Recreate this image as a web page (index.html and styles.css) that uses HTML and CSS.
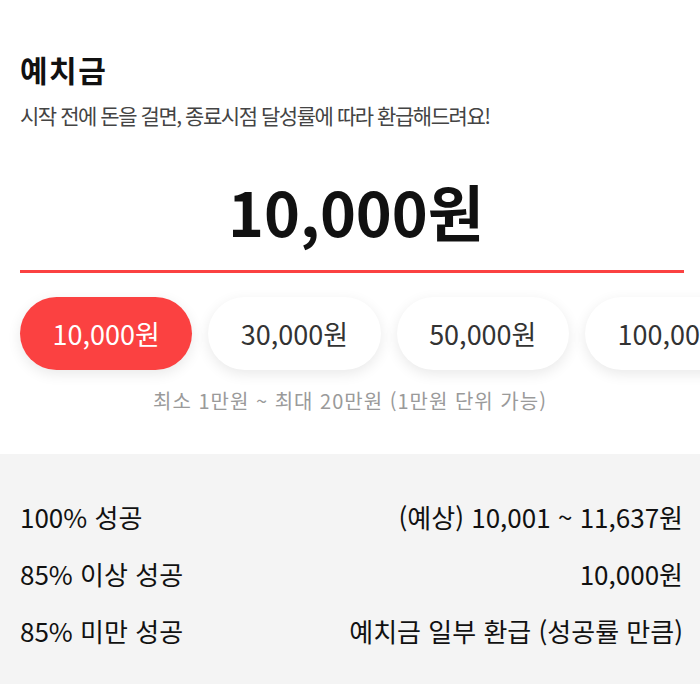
FILE: index.html
```html
<!DOCTYPE html>
<html lang="ko">
<head>
  <meta charset="UTF-8" />
  <meta name="viewport" content="width=device-width, initial-scale=1.0" />
  <title>예치금</title>
  <link rel="stylesheet" href="styles.css">
</head>
<body>
  <div class="deposit">
    <h1>예치금</h1>
    <p class="desc">시작 전에 돈을 걸면, 종료시점 달성률에 따라 환급해드려요!</p>

    <div class="amount">10,000원</div>

    <div class="chips">
      <button class="chip active">10,000원</button>
      <button class="chip">30,000원</button>
      <button class="chip">50,000원</button>
      <button class="chip">100,000원</button>
      <button class="chip">200,000원</button>
    </div>

    <p class="hint">최소 1만원 ~ 최대 20만원 (1만원 단위 가능)</p>
  </div>

  <div class="refund">
    <div class="refund-row">
      <span>100% 성공</span>
      <span>(예상) 10,001 ~ 11,637원</span>
    </div>
    <div class="refund-row">
      <span>85% 이상 성공</span>
      <span>10,000원</span>
    </div>
    <div class="refund-row">
      <span>85% 미만 성공</span>
      <span>예치금 일부 환급 (성공률 만큼)</span>
    </div>
  </div>
</body>
</html>
```

FILE: styles.css
```css
body {
  margin: 0;
  font-family: "Noto Sans CJK KR", "Noto Sans", sans-serif;
  background-color: #fff;
  color: #111;
}

.deposit {
  padding: 49px 0 0;
}

h1 {
  margin: 0 20px;
  font-size: 30px;
  font-weight: bold;
  line-height: 40px;
  letter-spacing: 1.5px;
}

.desc {
  margin: 11px 20px 0;
  font-size: 21px;
  line-height: 30px;
  color: #444;
  letter-spacing: -1.45px;
}

.amount {
  margin: 44px 16px 0 20px;
  padding: 0 0 22px 8px;
  border-bottom: 3px solid #fb4141;
  text-align: center;
  font-size: 61px;
  font-weight: bold;
  line-height: 74px;
}

.chips {
  display: flex;
  gap: 16px;
  padding: 24px 20px 15px;
  overflow: hidden;
}

.chip {
  flex: none;
  height: 73px;
  padding: 0 32.5px;
  border: none;
  border-radius: 37px;
  background-color: #fff;
  color: #333;
  font-family: inherit;
  font-size: 27px;
  box-shadow: 0 4px 14px rgba(0, 0, 0, 0.09);
}

.chip.active {
  background-color: #fb4141;
  color: #fff;
}

.hint {
  margin: 2px 0 0;
  text-align: center;
  font-size: 20px;
  line-height: 28px;
  color: #9a9a9a;
  letter-spacing: 1px;
}

.refund {
  margin-top: 39px;
  padding: 46px 17px 40px 20px;
  background-color: #f4f4f4;
  display: flex;
  flex-direction: column;
  gap: 23px;
}

.refund-row {
  display: flex;
  justify-content: space-between;
  font-size: 26px;
  line-height: 34px;
  color: #111;
}
```
